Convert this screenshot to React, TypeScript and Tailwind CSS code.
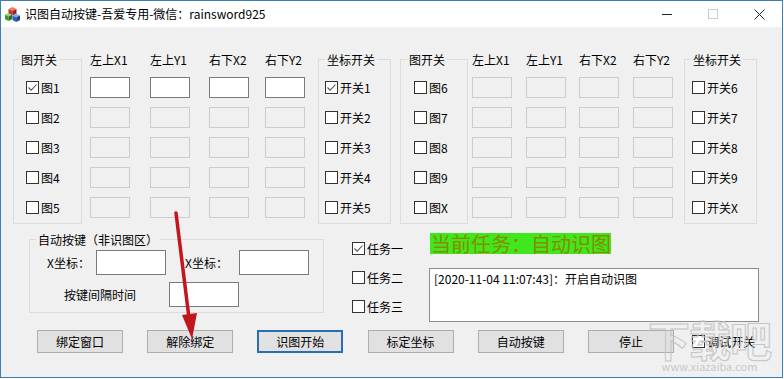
import React from "react";

type CheckProps = { checked?: boolean; label: string };

function Check({ checked, label }: CheckProps) {
  return (
    <div className="flex h-[21px] items-center gap-[2px]">
      <span className="flex h-[13px] w-[13px] items-center justify-center border border-[#333333] bg-white">
        {checked ? (
          <svg width="11" height="11" viewBox="0 0 11 11">
            <path d="M1.5 5.5 L4.2 8.2 L9.5 2.5" fill="none" stroke="#555555" strokeWidth="1.1" />
          </svg>
        ) : null}
      </span>
      <span>{label}</span>
    </div>
  );
}

function Box({ enabled }: { enabled?: boolean }) {
  return enabled ? (
    <div className="h-[21px] w-[40px] border border-[#7a7a7a] bg-white" />
  ) : (
    <div className="h-[21px] w-[40px] border border-[#cccccc] bg-[#f0f0f0]" />
  );
}

function Column({ title, enabled, className }: { title: string; enabled?: boolean; className: string }) {
  return (
    <div className={"flex w-[40px] flex-col " + className}>
      <div className="h-[14px] whitespace-nowrap leading-[14px]">{title}</div>
      <div className="mt-[10px] flex flex-col gap-[9px]">
        <Box enabled={enabled} />
        <Box />
        <Box />
        <Box />
        <Box />
      </div>
    </div>
  );
}

function Group({
  title,
  className,
  titleClass,
  children,
}: {
  title: string;
  className: string;
  titleClass: string;
  children: React.ReactNode;
}) {
  return (
    <div className={"relative border border-[#dcdcdc] " + className}>
      <span className={"absolute -top-[7px] whitespace-nowrap bg-[#f0f0f0] px-[2px] leading-[14px] " + titleClass}>
        {title}
      </span>
      {children}
    </div>
  );
}

function Button({ label, primary }: { label: string; primary?: boolean }) {
  return primary ? (
    <div className="flex h-[23px] w-[86px] items-center justify-center border-2 border-[#2a6fb5] bg-[#e1e1e1]">
      {label}
    </div>
  ) : (
    <div className="flex h-[23px] w-[86px] items-center justify-center border border-[#adadad] bg-[#e1e1e1]">
      {label}
    </div>
  );
}

function AppIcon() {
  return (
    <svg width="17" height="17" viewBox="0 0 17 17">
      {/* red cube */}
      <polygon points="8.5,1 12.5,3 8.5,5 4.5,3" fill="#f07a6a" />
      <polygon points="4.5,3 8.5,5 8.5,9.5 4.5,7.5" fill="#c8302a" />
      <polygon points="8.5,5 12.5,3 12.5,7.5 8.5,9.5" fill="#9a1f1a" />
      {/* green cube */}
      <polygon points="4.5,7 8,8.8 4.5,10.6 1,8.8" fill="#8fd66a" />
      <polygon points="1,8.8 4.5,10.6 4.5,15 1,13.2" fill="#3c9a2a" />
      <polygon points="4.5,10.6 8,8.8 8,13.2 4.5,15" fill="#2a6e1c" />
      {/* blue cube */}
      <polygon points="12.2,7.5 16,9.4 12.2,11.3 8.4,9.4" fill="#7fb0f0" />
      <polygon points="8.4,9.4 12.2,11.3 12.2,16 8.4,14" fill="#2d62c0" />
      <polygon points="12.2,11.3 16,9.4 16,14 12.2,16" fill="#1c3f8a" />
    </svg>
  );
}

export default function App() {
  return (
    <div className="relative h-[379px] w-[784px] overflow-hidden bg-white text-[12px] text-black [font-family:'Noto_Sans_CJK_SC',sans-serif]">
      <div className="flex h-[378px] w-[783px] flex-col border border-[#3b7fb3] bg-[#f0f0f0]">
        {/* title bar */}
        <div className="flex h-[26px] shrink-0 items-center bg-white">
          <div className="ml-[3px] mt-[1px]">
            <AppIcon />
          </div>
          <div className="ml-[4px] leading-[14px]">识图自动按键-吾爱专用-微信：rainsword925</div>
          <div className="ml-auto flex h-full">
            <div className="flex w-[46px] items-center justify-center">
              <div className="h-px w-[10px] bg-[#222222]" />
            </div>
            <div className="flex w-[46px] items-center justify-center">
              <div className="h-[10px] w-[10px] border border-[#cccccc]" />
            </div>
            <div className="flex w-[46px] items-center justify-center">
              <svg width="11" height="11" viewBox="0 0 11 11">
                <path d="M0.5 0.5 L10.5 10.5 M10.5 0.5 L0.5 10.5" stroke="#222222" strokeWidth="1" />
              </svg>
            </div>
          </div>
        </div>

        {/* top grid */}
        <div className="flex items-start pl-[12px] pt-[26px]">
          <Group title="图开关" className="mt-[6px] h-[165px] w-[69px]" titleClass="left-[5px]">
            <div className="flex flex-col gap-[9px] pl-[12px] pt-[17px]">
              <Check checked label="图1" />
              <Check label="图2" />
              <Check label="图3" />
              <Check label="图4" />
              <Check label="图5" />
            </div>
          </Group>
          <Column title="左上X1" enabled className="ml-[8px]" />
          <Column title="左上Y1" enabled className="ml-[20px]" />
          <Column title="右下X2" enabled className="ml-[19px]" />
          <Column title="右下Y2" enabled className="ml-[16px]" />
          <Group title="坐标开关" className="ml-[13px] mt-[6px] h-[165px] w-[73px]" titleClass="left-[6px]">
            <div className="flex flex-col gap-[9px] pl-[6px] pt-[17px]">
              <Check checked label="开关1" />
              <Check label="开关2" />
              <Check label="开关3" />
              <Check label="开关4" />
              <Check label="开关5" />
            </div>
          </Group>
          <Group title="图开关" className="ml-[9px] mt-[6px] h-[165px] w-[68px]" titleClass="left-[6px]">
            <div className="flex flex-col gap-[9px] pl-[13px] pt-[17px]">
              <Check label="图6" />
              <Check label="图7" />
              <Check label="图8" />
              <Check label="图9" />
              <Check label="图X" />
            </div>
          </Group>
          <Column title="左上X1" className="ml-[4px]" />
          <Column title="左上Y1" className="ml-[14px]" />
          <Column title="右下X2" className="ml-[13px]" />
          <Column title="右下Y2" className="ml-[14px]" />
          <Group title="坐标开关" className="ml-[11px] mt-[6px] h-[165px] w-[73px]" titleClass="left-[6px]">
            <div className="flex flex-col gap-[9px] pl-[7px] pt-[17px]">
              <Check label="开关6" />
              <Check label="开关7" />
              <Check label="开关8" />
              <Check label="开关9" />
              <Check label="开关X" />
            </div>
          </Group>
        </div>

        {/* lower area */}
        <div className="mt-[9px] flex items-start pl-[28px]">
          <Group title="自动按键（非识图区）" className="mt-[6px] h-[74px] w-[295px]" titleClass="left-[6px]">
            <div className="flex flex-col pt-[10px]">
              <div className="flex h-[25px] items-center pl-[17px]">
                <span className="w-[49px]">X坐标：</span>
                <div className="h-[25px] w-[70px] border border-[#7a7a7a] bg-white" />
                <span className="ml-[19px] w-[54px]">X坐标：</span>
                <div className="h-[25px] w-[70px] border border-[#7a7a7a] bg-white" />
              </div>
              <div className="mt-[7px] flex h-[25px] items-center pl-[34px]">
                <span className="w-[105px]">按键间隔时间</span>
                <div className="h-[25px] w-[70px] border border-[#7a7a7a] bg-white" />
              </div>
            </div>
          </Group>
          <div className="ml-[28px] flex w-[77px] flex-col gap-[8px] pt-[5px]">
            <Check checked label="任务一" />
            <Check label="任务二" />
            <Check label="任务三" />
          </div>
          <div className="flex flex-col">
            <div className="ml-[1px] h-[21px] w-[181px] whitespace-nowrap bg-[#3ee81c] pl-[1px] text-[20px] leading-[21px] text-[#8a8a00]">
              当前任务：自动识图
            </div>
            <div className="mt-[14px] h-[54px] w-[330px] border border-[#8c8c8c] bg-white pl-[4px] pt-[2px] leading-[16px]">
              [2020-11-04 11:07:43]：开启自动识图
            </div>
          </div>
        </div>

        {/* buttons */}
        <div className="mt-[8px] flex items-center gap-[24.2px] pl-[36px]">
          <Button label="绑定窗口" />
          <Button label="解除绑定" />
          <Button label="识图开始" primary />
          <Button label="标定坐标" />
          <Button label="自动按键" />
          <Button label="停止" />
          <div className="-ml-[6px]">
            <Check label="调试开关" />
          </div>
        </div>
      </div>

      {/* watermark */}
      <div className="pointer-events-none absolute left-[648px] top-[316px] flex flex-col items-center">
        <div className="text-[42px] font-bold leading-[46px] tracking-[-1px] text-transparent [-webkit-text-stroke:1px_#c4c4c4]">
          下载吧
        </div>
        <div className="-mt-[2px] text-[11px] leading-[12px] text-[#c8c8c8]">www.xiazaiba.com</div>
      </div>

      {/* red arrow */}
      <svg className="pointer-events-none absolute left-0 top-0" width="784" height="379" viewBox="0 0 784 379">
        <line x1="176" y1="213" x2="189" y2="318" stroke="#c2161c" strokeWidth="3.5" strokeLinecap="round" />
        <polygon points="182,315 197,313 192,339" fill="#c2161c" />
      </svg>
    </div>
  );
}
